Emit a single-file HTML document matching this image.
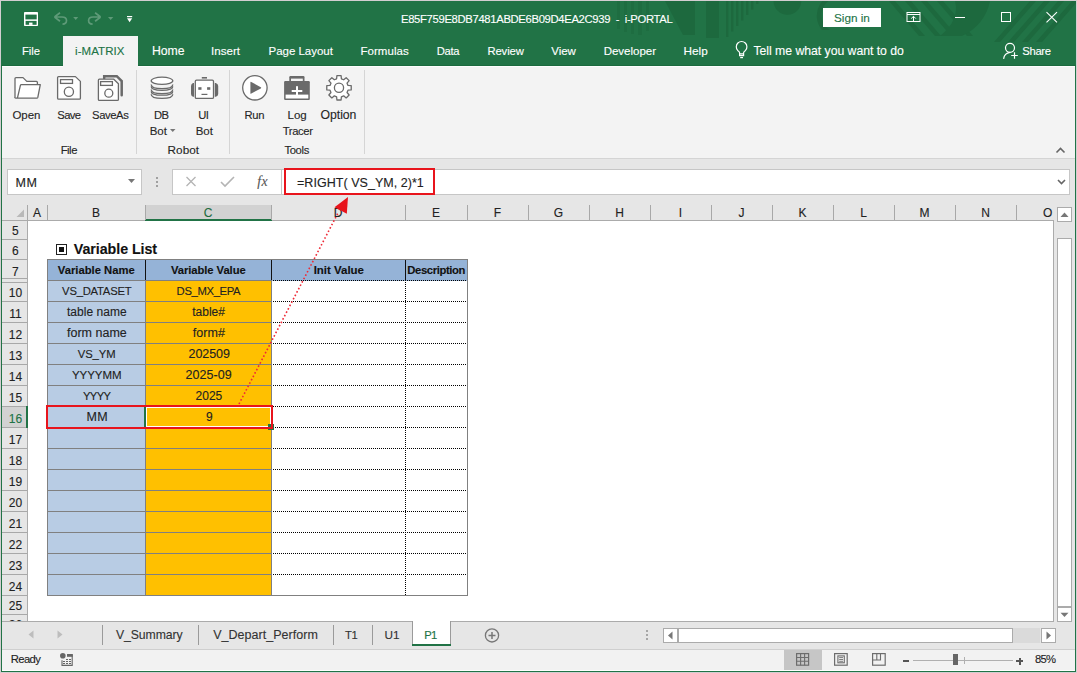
<!DOCTYPE html>
<html><head><meta charset="utf-8"><style>
html,body{margin:0;padding:0;}
body{width:1077px;height:673px;overflow:hidden;position:relative;background:#d3ced1;font-family:"Liberation Sans",sans-serif;}
body>div{position:absolute;}
.t{white-space:pre;-webkit-text-stroke:0.12px currentColor;}
svg{position:absolute;left:0;top:0;}
</style></head><body>
<div style="left:1px;top:1px;width:1075px;height:671px;background:#217346;"></div>
<svg width="1077" height="673" viewBox="0 0 1077 673">
<defs><clipPath id="tb"><rect x="1" y="1" width="1075" height="64"/></clipPath></defs>
<g fill="#1d693e" clip-path="url(#tb)"><path d="M665,1 L695,1 L695,35 L683,35 Z"/><g opacity="0.55"><rect x="617" y="1" width="3" height="28"/><rect x="624" y="1" width="3" height="31"/><rect x="631" y="1" width="3" height="33"/><rect x="638" y="1" width="4" height="34"/><rect x="646" y="1" width="3" height="30"/></g><rect x="706" y="1" width="13" height="37"/><rect x="726" y="1" width="2.4" height="36.0"/><rect x="731" y="1" width="2.4" height="30.5"/><rect x="736" y="1" width="2.4" height="25.0"/><rect x="741" y="1" width="2.4" height="19.5"/><rect x="746" y="1" width="2.4" height="14.0"/><rect x="751" y="1" width="2.4" height="8.5"/><rect x="756" y="1" width="2.4" height="3.0"/><circle cx="787.4" cy="1" r="13.8"/><path d="M822,30 A22,22 0 0 1 842,-6 L848,0 A15,15 0 0 0 830,30 Z"/><path d="M889,1 L895,1 L925,36 L919,36 Z"/><path d="M905,1 L911,1 L941,36 L935,36 Z"/><path d="M921,1 L927,1 L957,36 L951,36 Z"/><path d="M937,1 L943,1 L973,36 L967,36 Z"/><path d="M955,1 L990,1 Q985,25 962,36 L940,36 Q960,20 955,1 Z"/><path d="M1030,1 L1036,1 L1000,42 L994,42 Z"/><path d="M1044,1 L1050,1 L1014,42 L1008,42 Z"/><path d="M1058,1 L1064,1 L1028,42 L1022,42 Z"/><path d="M1072,1 L1078,1 L1042,42 L1036,42 Z"/></g>
</svg>
<div style="left:2px;top:66px;width:1073px;height:92px;background:#f3f3f3;border-top:1px solid #fdfdfd;box-sizing:border-box;"></div>
<div style="left:1px;top:65px;width:1075px;height:1px;background:#1b6a3e;"></div>
<div style="left:63px;top:36px;width:75px;height:31px;background:#f3f3f3;"></div>
<div style="left:2px;top:158px;width:1073px;height:1px;background:#d4d4d4;"></div>
<div style="left:2px;top:159px;width:1073px;height:46px;background:#e6e6e6;"></div>
<div class="t" style="left:401.00px;top:13.75px;font-size:11.25px;line-height:11.25px;color:#fff;letter-spacing:-0.325px;">E85F759E8DB7481ABDE6B09D4EA2C939  -  i-PORTAL</div>
<div style="left:823px;top:8px;width:58px;height:19px;background:#fff;"></div>
<div class="t" style="left:834.00px;top:12.25px;font-size:11.75px;line-height:11.75px;color:#217346;letter-spacing:-0.022px;">Sign in</div>
<div class="t" style="left:22.00px;top:45.75px;font-size:11.25px;line-height:11.25px;color:#fff;letter-spacing:-0.041px;">File</div>
<div class="t" style="left:152.00px;top:44.75px;font-size:12.25px;line-height:12.25px;color:#fff;letter-spacing:-0.061px;">Home</div>
<div class="t" style="left:211.00px;top:45.50px;font-size:11.5px;line-height:11.5px;color:#fff;letter-spacing:0.048px;">Insert</div>
<div class="t" style="left:268.60px;top:45.50px;font-size:11.5px;line-height:11.5px;color:#fff;letter-spacing:-0.028px;">Page Layout</div>
<div class="t" style="left:360.50px;top:45.50px;font-size:11.5px;line-height:11.5px;color:#fff;letter-spacing:0.038px;">Formulas</div>
<div class="t" style="left:436.70px;top:45.75px;font-size:11.25px;line-height:11.25px;color:#fff;letter-spacing:-0.290px;">Data</div>
<div class="t" style="left:487.40px;top:45.75px;font-size:11.25px;line-height:11.25px;color:#fff;letter-spacing:-0.084px;">Review</div>
<div class="t" style="left:551.30px;top:45.50px;font-size:11.5px;line-height:11.5px;color:#fff;letter-spacing:-0.083px;">View</div>
<div class="t" style="left:603.70px;top:45.50px;font-size:11.5px;line-height:11.5px;color:#fff;letter-spacing:-0.015px;">Developer</div>
<div class="t" style="left:683.50px;top:45.25px;font-size:11.75px;line-height:11.75px;color:#fff;letter-spacing:0.010px;">Help</div>
<div class="t" style="left:753.50px;top:44.75px;font-size:12.25px;line-height:12.25px;color:#fff;letter-spacing:-0.033px;">Tell me what you want to do</div>
<div class="t" style="left:1022.30px;top:45.75px;font-size:11.25px;line-height:11.25px;color:#fff;letter-spacing:-0.329px;">Share</div>
<div class="t" style="left:75.00px;top:45.50px;font-size:11.5px;line-height:11.5px;color:#217346;letter-spacing:0.075px;">i-MATRIX</div>
<div class="t" style="left:12.50px;top:109.50px;font-size:11.5px;line-height:11.5px;color:#262626;letter-spacing:-0.076px;">Open</div>
<div class="t" style="left:57.30px;top:109.75px;font-size:11.25px;line-height:11.25px;color:#262626;letter-spacing:-0.646px;">Save</div>
<div class="t" style="left:92.10px;top:109.75px;font-size:11.25px;line-height:11.25px;color:#262626;letter-spacing:-0.413px;">SaveAs</div>
<div class="t" style="left:60.70px;top:144.75px;font-size:11.25px;line-height:11.25px;color:#262626;letter-spacing:-0.475px;">File</div>
<div class="t" style="left:154.04px;top:109.75px;font-size:11.25px;line-height:11.25px;color:#262626;letter-spacing:-0.700px;">DB</div>
<div class="t" style="left:149.70px;top:125.50px;font-size:11.5px;line-height:11.5px;color:#262626;letter-spacing:-0.031px;">Bot</div>
<div class="t" style="left:198.28px;top:109.75px;font-size:11.25px;line-height:11.25px;color:#262626;letter-spacing:-0.700px;">UI</div>
<div class="t" style="left:195.70px;top:125.50px;font-size:11.5px;line-height:11.5px;color:#262626;letter-spacing:-0.031px;">Bot</div>
<div class="t" style="left:167.60px;top:144.25px;font-size:11.75px;line-height:11.75px;color:#262626;letter-spacing:0.013px;">Robot</div>
<div class="t" style="left:244.60px;top:109.75px;font-size:11.25px;line-height:11.25px;color:#262626;letter-spacing:-0.366px;">Run</div>
<div class="t" style="left:287.50px;top:109.50px;font-size:11.5px;line-height:11.5px;color:#262626;">Log</div>
<div class="t" style="left:282.70px;top:125.75px;font-size:11.25px;line-height:11.25px;color:#262626;letter-spacing:-0.357px;">Tracer</div>
<div class="t" style="left:320.60px;top:108.75px;font-size:12.25px;line-height:12.25px;color:#262626;letter-spacing:-0.058px;">Option</div>
<div class="t" style="left:284.40px;top:144.75px;font-size:11.25px;line-height:11.25px;color:#262626;letter-spacing:-0.339px;">Tools</div>
<div style="left:136px;top:70px;width:1px;height:84px;background:#d5d5d5;"></div>
<div style="left:229px;top:70px;width:1px;height:84px;background:#d5d5d5;"></div>
<div style="left:364px;top:70px;width:1px;height:84px;background:#d5d5d5;"></div>
<div style="left:7px;top:169px;width:135px;height:26px;background:#fff;border:1px solid #c6c6c6;box-sizing:border-box;"></div>
<div class="t" style="left:15.39px;top:176.50px;font-size:12.5px;line-height:12.5px;color:#222;letter-spacing:0.700px;">MM</div>
<div style="left:156px;top:177px;width:2px;height:2px;background:#a0a0a0;"></div>
<div style="left:156px;top:181px;width:2px;height:2px;background:#a0a0a0;"></div>
<div style="left:156px;top:185px;width:2px;height:2px;background:#a0a0a0;"></div>
<div style="left:172px;top:169px;width:110px;height:26px;background:#fff;border:1px solid #c6c6c6;box-sizing:border-box;"></div>
<div class="t" style="left:257.30px;top:175.25px;font-size:13.75px;line-height:13.75px;color:#555;letter-spacing:0.303px;font-family:'Liberation Serif',serif;font-style:italic;">fx</div>
<div style="left:281px;top:169px;width:789px;height:26px;background:#fff;border:1px solid #c6c6c6;box-sizing:border-box;"></div>
<div class="t" style="left:297.00px;top:176.50px;font-size:12.5px;line-height:12.5px;color:#222;letter-spacing:0.040px;">=RIGHT( VS_YM, 2)*1</div>
<div style="left:284px;top:168px;width:151px;height:27px;border:2px solid #e8141c;box-sizing:border-box;"></div>
<div style="left:2px;top:205px;width:1073px;height:417px;background:#e6e6e6;"></div>
<div style="left:28px;top:221px;width:1025px;height:400px;background:#fff;"></div>
<div style="left:145px;top:205px;width:126px;height:14px;background:#d2d2d2;"></div>
<div style="left:145px;top:219px;width:127px;height:2px;background:#217346;"></div>
<div style="left:2px;top:220px;width:143px;height:1px;background:#ababab;"></div>
<div style="left:272px;top:220px;width:781px;height:1px;background:#ababab;"></div>
<div style="left:27px;top:205px;width:1px;height:15px;background:#a8a8a8;"></div>
<div style="left:47px;top:205px;width:1px;height:15px;background:#a8a8a8;"></div>
<div style="left:145px;top:205px;width:1px;height:15px;background:#a8a8a8;"></div>
<div style="left:271px;top:205px;width:1px;height:15px;background:#a8a8a8;"></div>
<div style="left:405px;top:205px;width:1px;height:15px;background:#a8a8a8;"></div>
<div style="left:467px;top:205px;width:1px;height:15px;background:#a8a8a8;"></div>
<div style="left:528px;top:205px;width:1px;height:15px;background:#a8a8a8;"></div>
<div style="left:589px;top:205px;width:1px;height:15px;background:#a8a8a8;"></div>
<div style="left:650px;top:205px;width:1px;height:15px;background:#a8a8a8;"></div>
<div style="left:711px;top:205px;width:1px;height:15px;background:#a8a8a8;"></div>
<div style="left:772px;top:205px;width:1px;height:15px;background:#a8a8a8;"></div>
<div style="left:833px;top:205px;width:1px;height:15px;background:#a8a8a8;"></div>
<div style="left:894px;top:205px;width:1px;height:15px;background:#a8a8a8;"></div>
<div style="left:955px;top:205px;width:1px;height:15px;background:#a8a8a8;"></div>
<div style="left:1016px;top:205px;width:1px;height:15px;background:#a8a8a8;"></div>
<div style="left:27px;top:220px;width:1px;height:401px;background:#ababab;"></div>
<div class="t" style="left:33.00px;top:207.00px;font-size:12px;line-height:12px;color:#222;">A</div>
<div class="t" style="left:92.00px;top:207.00px;font-size:12px;line-height:12px;color:#222;">B</div>
<div class="t" style="left:203.67px;top:207.00px;font-size:12px;line-height:12px;color:#1d6b3f;">C</div>
<div class="t" style="left:333.67px;top:207.00px;font-size:12px;line-height:12px;color:#222;">D</div>
<div class="t" style="left:432.00px;top:207.00px;font-size:12px;line-height:12px;color:#222;">E</div>
<div class="t" style="left:493.83px;top:207.00px;font-size:12px;line-height:12px;color:#222;">F</div>
<div class="t" style="left:553.83px;top:207.00px;font-size:12px;line-height:12px;color:#222;">G</div>
<div class="t" style="left:615.17px;top:207.00px;font-size:12px;line-height:12px;color:#222;">H</div>
<div class="t" style="left:678.83px;top:207.00px;font-size:12px;line-height:12px;color:#222;">I</div>
<div class="t" style="left:738.50px;top:207.00px;font-size:12px;line-height:12px;color:#222;">J</div>
<div class="t" style="left:798.50px;top:207.00px;font-size:12px;line-height:12px;color:#222;">K</div>
<div class="t" style="left:860.16px;top:207.00px;font-size:12px;line-height:12px;color:#222;">L</div>
<div class="t" style="left:919.50px;top:207.00px;font-size:12px;line-height:12px;color:#222;">M</div>
<div class="t" style="left:981.17px;top:207.00px;font-size:12px;line-height:12px;color:#222;">N</div>
<div class="t" style="left:1043.00px;top:207.00px;font-size:12px;line-height:12px;color:#222;">O</div>
<div style="left:2px;top:239px;width:25px;height:1px;background:#a8a8a8;"></div>
<div style="left:2px;top:259px;width:25px;height:1px;background:#a8a8a8;"></div>
<div style="left:2px;top:278px;width:25px;height:1px;background:#a8a8a8;"></div>
<div style="left:2px;top:282px;width:25px;height:1px;background:#a8a8a8;"></div>
<div style="left:2px;top:301px;width:25px;height:1px;background:#a8a8a8;"></div>
<div style="left:2px;top:322px;width:25px;height:1px;background:#a8a8a8;"></div>
<div style="left:2px;top:343px;width:25px;height:1px;background:#a8a8a8;"></div>
<div style="left:2px;top:364px;width:25px;height:1px;background:#a8a8a8;"></div>
<div style="left:2px;top:385px;width:25px;height:1px;background:#a8a8a8;"></div>
<div style="left:2px;top:406px;width:25px;height:1px;background:#a8a8a8;"></div>
<div style="left:2px;top:427px;width:25px;height:1px;background:#a8a8a8;"></div>
<div style="left:2px;top:448px;width:25px;height:1px;background:#a8a8a8;"></div>
<div style="left:2px;top:469px;width:25px;height:1px;background:#a8a8a8;"></div>
<div style="left:2px;top:490px;width:25px;height:1px;background:#a8a8a8;"></div>
<div style="left:2px;top:511px;width:25px;height:1px;background:#a8a8a8;"></div>
<div style="left:2px;top:532px;width:25px;height:1px;background:#a8a8a8;"></div>
<div style="left:2px;top:553px;width:25px;height:1px;background:#a8a8a8;"></div>
<div style="left:2px;top:574px;width:25px;height:1px;background:#a8a8a8;"></div>
<div style="left:2px;top:595px;width:25px;height:1px;background:#a8a8a8;"></div>
<div style="left:2px;top:614px;width:25px;height:1px;background:#a8a8a8;"></div>
<div style="left:2px;top:407px;width:24px;height:20px;background:#d2d2d2;"></div>
<div style="left:26px;top:406px;width:2px;height:22px;background:#217346;"></div>
<div class="t" style="left:12.06px;top:225.00px;font-size:12px;line-height:12px;color:#222;">5</div>
<div class="t" style="left:12.06px;top:245.00px;font-size:12px;line-height:12px;color:#222;">6</div>
<div class="t" style="left:12.06px;top:266.00px;font-size:12px;line-height:12px;color:#222;">7</div>
<div class="t" style="left:8.73px;top:287.00px;font-size:12px;line-height:12px;color:#222;">10</div>
<div class="t" style="left:9.17px;top:308.00px;font-size:12px;line-height:12px;color:#222;">11</div>
<div class="t" style="left:8.73px;top:329.00px;font-size:12px;line-height:12px;color:#222;">12</div>
<div class="t" style="left:8.73px;top:350.00px;font-size:12px;line-height:12px;color:#222;">13</div>
<div class="t" style="left:8.73px;top:371.00px;font-size:12px;line-height:12px;color:#222;">14</div>
<div class="t" style="left:8.73px;top:392.00px;font-size:12px;line-height:12px;color:#222;">15</div>
<div class="t" style="left:8.73px;top:413.00px;font-size:12px;line-height:12px;color:#217346;">16</div>
<div class="t" style="left:8.73px;top:434.00px;font-size:12px;line-height:12px;color:#222;">17</div>
<div class="t" style="left:8.73px;top:455.00px;font-size:12px;line-height:12px;color:#222;">18</div>
<div class="t" style="left:8.73px;top:476.00px;font-size:12px;line-height:12px;color:#222;">19</div>
<div class="t" style="left:8.73px;top:497.00px;font-size:12px;line-height:12px;color:#222;">20</div>
<div class="t" style="left:8.73px;top:518.00px;font-size:12px;line-height:12px;color:#222;">21</div>
<div class="t" style="left:8.73px;top:539.00px;font-size:12px;line-height:12px;color:#222;">22</div>
<div class="t" style="left:8.73px;top:560.00px;font-size:12px;line-height:12px;color:#222;">23</div>
<div class="t" style="left:8.73px;top:581.00px;font-size:12px;line-height:12px;color:#222;">24</div>
<div class="t" style="left:8.73px;top:600.00px;font-size:12px;line-height:12px;color:#222;">25</div>
<div class="t" style="left:8.73px;top:619.00px;font-size:12px;line-height:12px;color:#222;clip-path:inset(0 0 10px 0);">26</div>
<div style="left:56px;top:244px;width:11px;height:11px;background:#fff;border:1px solid #222;box-sizing:border-box;"></div>
<div style="left:59px;top:247px;width:5px;height:5px;background:#111;"></div>
<div class="t" style="left:73.80px;top:241.75px;font-size:14.25px;line-height:14.25px;color:#111;font-weight:bold;letter-spacing:-0.055px;">Variable List</div>
<div style="left:47px;top:259px;width:421px;height:22px;background:#95b3d7;"></div>
<div style="left:47px;top:281px;width:98px;height:315px;background:#b8cce4;"></div>
<div style="left:145px;top:281px;width:127px;height:315px;background:#ffc000;"></div>
<div style="left:47px;top:259px;width:421px;height:1px;background:#808080;"></div>
<div style="left:47px;top:259px;width:1px;height:337px;background:#808080;"></div>
<div style="left:47px;top:595px;width:421px;height:1px;background:#808080;"></div>
<div style="left:467px;top:259px;width:1px;height:337px;background:#808080;"></div>
<div style="left:145px;top:260px;width:1px;height:21px;background:#111;"></div>
<div style="left:271px;top:260px;width:1px;height:21px;background:#111;"></div>
<div style="left:405px;top:260px;width:1px;height:21px;background:#111;"></div>
<div style="left:47px;top:280px;width:225px;height:1px;background:#808080;"></div>
<div style="left:47px;top:301px;width:225px;height:1px;background:#808080;"></div>
<div style="left:47px;top:322px;width:225px;height:1px;background:#808080;"></div>
<div style="left:47px;top:343px;width:225px;height:1px;background:#808080;"></div>
<div style="left:47px;top:364px;width:225px;height:1px;background:#808080;"></div>
<div style="left:47px;top:385px;width:225px;height:1px;background:#808080;"></div>
<div style="left:47px;top:406px;width:225px;height:1px;background:#808080;"></div>
<div style="left:47px;top:427px;width:225px;height:1px;background:#808080;"></div>
<div style="left:47px;top:448px;width:225px;height:1px;background:#808080;"></div>
<div style="left:47px;top:469px;width:225px;height:1px;background:#808080;"></div>
<div style="left:47px;top:490px;width:225px;height:1px;background:#808080;"></div>
<div style="left:47px;top:511px;width:225px;height:1px;background:#808080;"></div>
<div style="left:47px;top:532px;width:225px;height:1px;background:#808080;"></div>
<div style="left:47px;top:553px;width:225px;height:1px;background:#808080;"></div>
<div style="left:47px;top:574px;width:225px;height:1px;background:#808080;"></div>
<div style="left:145px;top:281px;width:1px;height:315px;background:#808080;"></div>
<div style="left:271px;top:281px;width:1px;height:315px;background:#808080;"></div>
<div style="left:273px;top:280px;width:194px;height:1px;background:repeating-linear-gradient(90deg,#000 0 1px,transparent 1px 2px);"></div>
<div style="left:273px;top:301px;width:194px;height:1px;background:repeating-linear-gradient(90deg,#000 0 1px,transparent 1px 2px);"></div>
<div style="left:273px;top:322px;width:194px;height:1px;background:repeating-linear-gradient(90deg,#000 0 1px,transparent 1px 2px);"></div>
<div style="left:273px;top:343px;width:194px;height:1px;background:repeating-linear-gradient(90deg,#000 0 1px,transparent 1px 2px);"></div>
<div style="left:273px;top:364px;width:194px;height:1px;background:repeating-linear-gradient(90deg,#000 0 1px,transparent 1px 2px);"></div>
<div style="left:273px;top:385px;width:194px;height:1px;background:repeating-linear-gradient(90deg,#000 0 1px,transparent 1px 2px);"></div>
<div style="left:273px;top:406px;width:194px;height:1px;background:repeating-linear-gradient(90deg,#000 0 1px,transparent 1px 2px);"></div>
<div style="left:273px;top:427px;width:194px;height:1px;background:repeating-linear-gradient(90deg,#000 0 1px,transparent 1px 2px);"></div>
<div style="left:273px;top:448px;width:194px;height:1px;background:repeating-linear-gradient(90deg,#000 0 1px,transparent 1px 2px);"></div>
<div style="left:273px;top:469px;width:194px;height:1px;background:repeating-linear-gradient(90deg,#000 0 1px,transparent 1px 2px);"></div>
<div style="left:273px;top:490px;width:194px;height:1px;background:repeating-linear-gradient(90deg,#000 0 1px,transparent 1px 2px);"></div>
<div style="left:273px;top:511px;width:194px;height:1px;background:repeating-linear-gradient(90deg,#000 0 1px,transparent 1px 2px);"></div>
<div style="left:273px;top:532px;width:194px;height:1px;background:repeating-linear-gradient(90deg,#000 0 1px,transparent 1px 2px);"></div>
<div style="left:273px;top:553px;width:194px;height:1px;background:repeating-linear-gradient(90deg,#000 0 1px,transparent 1px 2px);"></div>
<div style="left:273px;top:574px;width:194px;height:1px;background:repeating-linear-gradient(90deg,#000 0 1px,transparent 1px 2px);"></div>
<div style="left:405px;top:282px;width:1px;height:313px;background:repeating-linear-gradient(180deg,#000 0 1px,transparent 1px 2px);"></div>
<div class="t" style="left:57.80px;top:265.15px;font-size:11.25px;line-height:11.25px;color:#111;font-weight:bold;">Variable Name</div>
<div class="t" style="left:171.00px;top:265.15px;font-size:11.25px;line-height:11.25px;color:#111;font-weight:bold;letter-spacing:-0.075px;">Variable Value</div>
<div class="t" style="left:313.70px;top:264.90px;font-size:11.5px;line-height:11.5px;color:#111;font-weight:bold;letter-spacing:-0.021px;">Init Value</div>
<div class="t" style="left:407.30px;top:265.15px;font-size:11.25px;line-height:11.25px;color:#111;font-weight:bold;letter-spacing:-0.379px;">Description</div>
<div class="t" style="left:62.10px;top:285.75px;font-size:11.25px;line-height:11.25px;color:#222;letter-spacing:-0.220px;">VS_DATASET</div>
<div class="t" style="left:176.60px;top:285.75px;font-size:11.25px;line-height:11.25px;color:#222;letter-spacing:-0.336px;">DS_MX_EPA</div>
<div class="t" style="left:67.00px;top:306.00px;font-size:12.0px;line-height:12.0px;color:#222;letter-spacing:0.036px;">table name</div>
<div class="t" style="left:192.20px;top:306.00px;font-size:12.0px;line-height:12.0px;color:#222;letter-spacing:0.020px;">table#</div>
<div class="t" style="left:67.00px;top:326.50px;font-size:12.5px;line-height:12.5px;color:#222;">form name</div>
<div class="t" style="left:192.70px;top:326.50px;font-size:12.5px;line-height:12.5px;color:#222;letter-spacing:0.088px;">form#</div>
<div class="t" style="left:77.70px;top:348.75px;font-size:11.25px;line-height:11.25px;color:#222;letter-spacing:-0.059px;">VS_YM</div>
<div class="t" style="left:188.60px;top:347.50px;font-size:12.5px;line-height:12.5px;color:#222;letter-spacing:-0.082px;">202509</div>
<div class="t" style="left:72.00px;top:369.50px;font-size:11.5px;line-height:11.5px;color:#222;letter-spacing:-0.048px;">YYYYMM</div>
<div class="t" style="left:185.50px;top:368.50px;font-size:12.5px;line-height:12.5px;color:#222;letter-spacing:0.054px;">2025-09</div>
<div class="t" style="left:83.00px;top:390.75px;font-size:11.25px;line-height:11.25px;color:#222;letter-spacing:-0.638px;">YYYY</div>
<div class="t" style="left:195.60px;top:390.00px;font-size:12.0px;line-height:12.0px;color:#222;">2025</div>
<div class="t" style="left:86.60px;top:410.50px;font-size:12.5px;line-height:12.5px;color:#222;letter-spacing:0.175px;">MM</div>
<div class="t" style="left:206.00px;top:411.00px;font-size:12px;line-height:12px;color:#222;">9</div>
<div style="left:1053px;top:220px;width:1px;height:402px;background:#ababab;"></div>
<div style="left:2px;top:621px;width:1052px;height:1px;background:#ababab;"></div>
<div style="left:1057px;top:207px;width:15px;height:15px;background:#fff;border:1px solid #ababab;box-sizing:border-box;"></div>
<div style="left:1057px;top:238px;width:15px;height:369px;background:#fff;border:1px solid #ababab;box-sizing:border-box;"></div>
<div style="left:1057px;top:607px;width:15px;height:15px;background:#fff;border:1px solid #ababab;box-sizing:border-box;"></div>
<div style="left:2px;top:622px;width:1073px;height:27px;background:#e6e6e6;"></div>
<div style="left:102px;top:625px;width:1px;height:20px;background:#9a9a9a;"></div>
<div style="left:198px;top:625px;width:1px;height:20px;background:#9a9a9a;"></div>
<div style="left:333px;top:625px;width:1px;height:20px;background:#9a9a9a;"></div>
<div style="left:372px;top:625px;width:1px;height:20px;background:#9a9a9a;"></div>
<div style="left:412px;top:621px;width:39px;height:23px;background:#fff;border-left:1px solid #9a9a9a;border-right:1px solid #9a9a9a;box-sizing:border-box;"></div>
<div style="left:412px;top:644px;width:39px;height:2px;background:#217346;"></div>
<div class="t" style="left:115.90px;top:628.75px;font-size:12.25px;line-height:12.25px;color:#333;letter-spacing:-0.075px;">V_Summary</div>
<div class="t" style="left:213.20px;top:628.50px;font-size:12.5px;line-height:12.5px;color:#333;letter-spacing:0.026px;">V_Depart_Perform</div>
<div class="t" style="left:345.00px;top:629.75px;font-size:11.25px;line-height:11.25px;color:#333;letter-spacing:-0.329px;">T1</div>
<div class="t" style="left:384.60px;top:629.25px;font-size:11.75px;line-height:11.75px;color:#333;letter-spacing:-0.117px;">U1</div>
<div class="t" style="left:424.22px;top:629.75px;font-size:11.25px;line-height:11.25px;color:#217346;letter-spacing:-0.700px;">P1</div>
<div style="left:646px;top:630px;width:2px;height:2px;background:#a6a6a6;"></div>
<div style="left:646px;top:634px;width:2px;height:2px;background:#a6a6a6;"></div>
<div style="left:646px;top:638px;width:2px;height:2px;background:#a6a6a6;"></div>
<div style="left:663px;top:628px;width:15px;height:15px;background:#fff;border:1px solid #ababab;box-sizing:border-box;"></div>
<div style="left:678px;top:628px;width:335px;height:15px;background:#fff;border:1px solid #ababab;box-sizing:border-box;"></div>
<div style="left:1013px;top:628px;width:27px;height:15px;background:#dadada;"></div>
<div style="left:1041px;top:628px;width:15px;height:15px;background:#fff;border:1px solid #ababab;box-sizing:border-box;"></div>
<div style="left:2px;top:649px;width:1073px;height:1px;background:#cfcfcf;"></div>
<div style="left:2px;top:650px;width:1073px;height:21px;background:#f2f2f2;"></div>
<div style="left:2px;top:670px;width:1073px;height:1px;background:#fff;"></div>
<div class="t" style="left:10.80px;top:653.75px;font-size:11.25px;line-height:11.25px;color:#222;letter-spacing:-0.631px;">Ready</div>
<div style="left:784px;top:650px;width:38px;height:20px;background:#c6c6c6;"></div>
<div style="left:903px;top:660px;width:6px;height:2px;background:#555;"></div>
<div style="left:913px;top:660px;width:100px;height:1px;background:#b0b0b0;"></div>
<div style="left:953px;top:654px;width:5px;height:11px;background:#666;"></div>
<div style="left:964px;top:657px;width:1px;height:7px;background:#b0b0b0;"></div>
<div style="left:1016px;top:660px;width:7px;height:2px;background:#555;"></div>
<div style="left:1018.5px;top:657.5px;width:2px;height:7px;background:#555;"></div>
<div class="t" style="left:1034.94px;top:653.75px;font-size:11.25px;line-height:11.25px;color:#222;letter-spacing:-0.700px;">85%</div>
<div style="left:144px;top:406px;width:2px;height:22px;background:#217346;"></div>
<div style="left:146px;top:407px;width:125px;height:1px;background:#fff;"></div>
<div style="left:146px;top:426px;width:123px;height:1px;background:#fff;"></div>
<div style="left:270px;top:407px;width:1px;height:18px;background:#fff;"></div>
<div style="left:146px;top:407px;width:1px;height:20px;background:#fff;"></div>
<div style="left:268px;top:424px;width:6px;height:6px;background:#217346;"></div>
<div style="left:46px;top:405px;width:227px;height:2px;background:#e8141c;"></div>
<div style="left:46px;top:427px;width:227px;height:2px;background:#e8141c;"></div>
<div style="left:46px;top:405px;width:2px;height:24px;background:#e8141c;"></div>
<div style="left:271px;top:405px;width:2px;height:24px;background:#e8141c;"></div>
<svg width="1077" height="673" viewBox="0 0 1077 673">
<path d="M170,129 L175.5,129 L172.75,132 Z" fill="#777"/>
<path d="M15,98 L15,78.6 Q15,77.6 16,77.6 L23,77.6 L26.8,81.4 L36.4,81.4 Q37.4,81.4 37.4,82.4 L37.4,84.6" fill="#fff" stroke="#6a6a6a" stroke-width="1.3" stroke-linejoin="round"/>
<path d="M17.4,98.2 L20.4,85.4 Q20.6,84.6 21.4,84.6 L40.3,84.6 L37.8,97.4 Q37.6,98.2 36.8,98.2 L16,98.2 Q15,98.2 15,97.2" fill="#fff" stroke="#6a6a6a" stroke-width="1.3" stroke-linejoin="round"/>
<path d="M58.6,76.6 L75.4,76.6 L80.4,81.4 L80.4,98.2 Q80.4,99.2 79.4,99.2 L58.6,99.2 Q57.6,99.2 57.6,98.2 L57.6,77.6 Q57.6,76.6 58.6,76.6 Z" fill="#fff" stroke="#6a6a6a" stroke-width="1.3" stroke-linejoin="round"/>
<rect x="60.5" y="79.6" width="12" height="3.8" fill="none" stroke="#6a6a6a" stroke-width="1.3"/>
<circle cx="68.9" cy="91.7" r="4.6" fill="none" stroke="#6a6a6a" stroke-width="1.3"/>
<path d="M104.2,78.2 L104.2,76.2 L116.8,76.2 L121.7,81.1 L121.7,95.2" fill="none" stroke="#6a6a6a" stroke-width="2.5" stroke-linejoin="miter" stroke-linecap="round"/>
<path d="M99.4,79.2 L113.8,79.2 L118.4,83.8 L118.4,99.4 Q118.4,100.4 117.4,100.4 L99.4,100.4 Q98.4,100.4 98.4,99.4 L98.4,80.2 Q98.4,79.2 99.4,79.2 Z" fill="#fff" stroke="#6a6a6a" stroke-width="1.3" stroke-linejoin="round"/>
<rect x="100.6" y="81.6" width="11.8" height="3.8" fill="none" stroke="#6a6a6a" stroke-width="1.3"/>
<circle cx="108.8" cy="93.2" r="4" fill="none" stroke="#6a6a6a" stroke-width="1.3"/>
<path d="M151.2,84.5 Q151.2,88.7 162,88.7 Q172.8,88.7 172.8,84.5" fill="none" stroke="#6a6a6a" stroke-width="1.3"/>
<path d="M151.2,86.6 Q151.2,90.4 162,90.4 Q172.8,90.4 172.8,86.6" fill="none" stroke="#6a6a6a" stroke-width="1.3"/>
<path d="M151.2,89.4 Q151.2,93.6 162,93.6 Q172.8,93.6 172.8,89.4" fill="none" stroke="#6a6a6a" stroke-width="1.3"/>
<path d="M151.2,91.4 Q151.2,95.2 162,95.2 Q172.8,95.2 172.8,91.4" fill="none" stroke="#6a6a6a" stroke-width="1.3"/>
<path d="M151.2,94.2 Q151.2,98.4 162,98.4 Q172.8,98.4 172.8,94.2" fill="none" stroke="#6a6a6a" stroke-width="1.3"/>
<ellipse cx="162" cy="80.8" rx="10.8" ry="3.6" fill="#fff" stroke="#6a6a6a" stroke-width="1.3" stroke-linejoin="round"/>
<rect x="195.3" y="80.2" width="18.2" height="18.2" rx="1.2" fill="#fff" stroke="#6a6a6a" stroke-width="1.3" stroke-linejoin="round"/>
<rect x="201.8" y="77" width="5.2" height="1.6" fill="#6a6a6a"/>
<path d="M194,83 L194,96.8 L193,96.8 Q191,96 191,94 L191,86 Q191,84 193,83 Z" fill="#6a6a6a"/>
<path d="M214.8,83 L214.8,96.8 L215.8,96.8 Q218.2,96 218.2,94 L218.2,86 Q218.2,84 215.8,83 Z" fill="#6a6a6a"/>
<rect x="198.3" y="87.2" width="3.2" height="2.6" fill="#6a6a6a"/><rect x="207.1" y="87.2" width="3.2" height="2.6" fill="#6a6a6a"/>
<rect x="201.5" y="93.8" width="5.9" height="1.2" fill="#6a6a6a"/>
<circle cx="254.9" cy="87.8" r="12.2" fill="#fff" stroke="#6a6a6a" stroke-width="1.3" stroke-linejoin="round"/>
<path d="M250.4,82.4 Q250.4,81.4 251.3,82 L260.8,87.2 Q261.6,87.8 260.8,88.4 L251.3,93.6 Q250.4,94.2 250.4,93.2 Z" fill="#6a6a6a"/>
<path d="M289.3,81 L289.3,77.2 Q289.3,76.1 290.4,76.1 L303.4,76.1 Q304.5,76.1 304.5,77.2 L304.5,81" fill="#6a6a6a"/>
<rect x="291" y="78.6" width="11.8" height="2.6" fill="#f3f3f3"/>
<path d="M284.1,82.2 Q284.1,81.1 285.2,81.1 L308.7,81.1 Q309.8,81.1 309.8,82.2 L309.8,98.9 Q309.8,99.9 308.8,99.9 L285.1,99.9 Q284.1,99.9 284.1,98.9 Z" fill="#6a6a6a"/>
<rect x="285.6" y="94.6" width="22.7" height="3.9" fill="#fff"/>
<rect x="291.7" y="90" width="10.6" height="2" fill="#fff"/><rect x="296" y="86.2" width="2" height="10" fill="#fff"/>
<path d="M347.99,85.41 L351.22,85.70 L351.22,89.90 L347.99,90.19 L347.05,92.46 L349.13,94.96 L346.16,97.93 L343.66,95.85 L341.39,96.79 L341.10,100.02 L336.90,100.02 L336.61,96.79 L334.34,95.85 L331.84,97.93 L328.87,94.96 L330.95,92.46 L330.01,90.19 L326.78,89.90 L326.78,85.70 L330.01,85.41 L330.95,83.14 L328.87,80.64 L331.84,77.67 L334.34,79.75 L336.61,78.81 L336.90,75.58 L341.10,75.58 L341.39,78.81 L343.66,79.75 L346.16,77.67 L349.13,80.64 L347.05,83.14 Z" fill="#fff" stroke="#6a6a6a" stroke-width="1.3" stroke-linejoin="round"/>
<circle cx="339" cy="87.8" r="4.6" fill="none" stroke="#6a6a6a" stroke-width="1.3"/>
<path d="M1056.5,152.5 L1060.5,148.5 L1064.5,152.5" fill="none" stroke="#666" stroke-width="1.6"/>
<path d="M128,179 L135,179 L131.5,183 Z" fill="#777"/>
<path d="M186.5,177 L195.5,186 M195.5,177 L186.5,186" stroke="#b4b4b4" stroke-width="1.3"/>
<path d="M221,182 L225,186 L234,177" fill="none" stroke="#b4b4b4" stroke-width="1.6"/>
<path d="M1058,180 L1061.5,183.5 L1065,180" fill="none" stroke="#666" stroke-width="1.6"/>
<path d="M24,209.5 L24,217 L16.5,217 Z" fill="#b9b9b9"/>
<path d="M1060.5,217 L1064.5,212.5 L1068.5,217 Z" fill="#777"/>
<path d="M1060.5,612.8 L1064.5,617 L1068.5,612.8 Z" fill="#777"/>
<path d="M33.5,630.5 L28.5,634.5 L33.5,638.5 Z" fill="#bdbdbd"/>
<path d="M57.5,630.5 L62.5,634.5 L57.5,638.5 Z" fill="#bdbdbd"/>
<circle cx="492" cy="635.4" r="6.6" fill="none" stroke="#777" stroke-width="1.3"/>
<path d="M488.5,635.4 L495.5,635.4 M492,631.9 L492,638.9" stroke="#777" stroke-width="1.5"/>
<path d="M672.5,631.5 L668,635.5 L672.5,639.5 Z" fill="#777"/>
<path d="M1046.5,631.5 L1051,635.5 L1046.5,639.5 Z" fill="#777"/>
<path d="M62,660.2 V665.4 H72.2 V654.6" fill="none" stroke="#666" stroke-width="1.1"/>
<rect x="67" y="654" width="5.8" height="2.8" fill="#666"/>
<circle cx="62.8" cy="655.8" r="2.8" fill="#666"/>
<g fill="#666"><rect x="66" y="659" width="2" height="1"/><rect x="69" y="659" width="2" height="1"/><rect x="63" y="661" width="2" height="1"/><rect x="66" y="661" width="2" height="1"/><rect x="69" y="661" width="2" height="1"/><rect x="63" y="663" width="2" height="1"/><rect x="66" y="663" width="2" height="1"/><rect x="69" y="663" width="2" height="1"/></g>
<rect x="796.6" y="653.6" width="12" height="11.6" fill="none" stroke="#6d6d6d" stroke-width="1.2"/>
<path d="M796.6,657.5 H808.6 M796.6,661.3 H808.6 M800.6,653.6 V665.2 M804.6,653.6 V665.2" stroke="#6d6d6d" stroke-width="1.1"/>
<rect x="834.6" y="653.6" width="12.6" height="11.6" fill="none" stroke="#6d6d6d" stroke-width="1.2"/>
<rect x="837.9" y="655.9" width="6.4" height="6.9" fill="none" stroke="#6d6d6d" stroke-width="1.1"/>
<path d="M839.2,657.6 H843 M839.2,659.5 H843 M839.2,661.3 H843" stroke="#6d6d6d" stroke-width="0.9"/>
<rect x="872.6" y="653.6" width="12.6" height="11.6" fill="none" stroke="#6d6d6d" stroke-width="1.2"/>
<path d="M876.8,653.6 V660 M880.5,653.6 V660 H872.6" fill="none" stroke="#6d6d6d" stroke-width="1.1"/>
<rect x="24" y="12" width="14" height="14" rx="0.8" fill="#fff"/>
<rect x="25.4" y="14.6" width="11.3" height="4.8" fill="#217346"/>
<rect x="25.6" y="20.9" width="11" height="3.9" fill="#217346"/>
<rect x="29.1" y="22.6" width="3.4" height="2.3" fill="#fff"/>
<path d="M54.5,17 L60,12.8 M54.5,17 L60,21.2 M54.5,17 L62,17 Q66.5,17 66.5,20.5 Q66.5,24 62.5,24.2" fill="none" stroke="#5e9a78" stroke-width="1.7"/>
<path d="M73.2,17 L78.2,17 L75.7,19.9 Z" fill="#5e9a78"/>
<path d="M100.6,17 L95.1,12.8 M100.6,17 L95.1,21.2 M100.6,17 L93.1,17 Q88.6,17 88.6,20.5 Q88.6,24 92.6,24.2" fill="none" stroke="#5e9a78" stroke-width="1.7"/>
<path d="M108,17 L113.3,17 L110.65,19.9 Z" fill="#5e9a78"/>
<rect x="127" y="16" width="5.2" height="1.2" fill="#fff"/><path d="M127,18.3 L132.2,18.3 L129.6,22.2 Z" fill="#fff"/>
<rect x="907" y="12.5" width="13" height="9" fill="none" stroke="#fff" stroke-width="1"/>
<path d="M907,14.5 H920 M913.5,21 V16.5 M911.2,18.6 L913.5,16.3 L915.8,18.6" fill="none" stroke="#fff" stroke-width="1"/>
<rect x="955" y="17" width="10" height="1" fill="#fff"/>
<rect x="1001.5" y="12.5" width="9" height="9" fill="none" stroke="#fff" stroke-width="1"/>
<path d="M1046.5,12.2 L1057,22.4 M1057,12.2 L1046.5,22.4" stroke="#fff" stroke-width="1.1"/>
<path d="M739.6,55.6 V52.8 Q739.6,51.8 737.7,50.4 A5.3,5.3 0 1 1 745.5,50.4 Q743.6,51.8 743.6,52.8 V55.6 Z M739.6,53.9 H743.6" fill="none" stroke="#fff" stroke-width="1.2"/>
<rect x="740.2" y="57" width="2.8" height="1.2" fill="#fff"/>
<circle cx="1010" cy="47.8" r="4.5" fill="none" stroke="#fff" stroke-width="1.2"/>
<path d="M1003.6,58.8 Q1004.4,53.2 1010,52.4" fill="none" stroke="#fff" stroke-width="1.2"/>
<path d="M1011.2,55.5 H1017.8 M1014.5,52.2 V58.8" stroke="#fff" stroke-width="1.2"/>
<line x1="239" y1="404" x2="338.5" y2="212" stroke="#ee2a36" stroke-width="1.6" stroke-dasharray="1.6 2.2"/>
<path d="M348,197 L334.5,207.2 L346.8,213.8 Z" fill="#e8141c"/>
</svg>
</body></html>
